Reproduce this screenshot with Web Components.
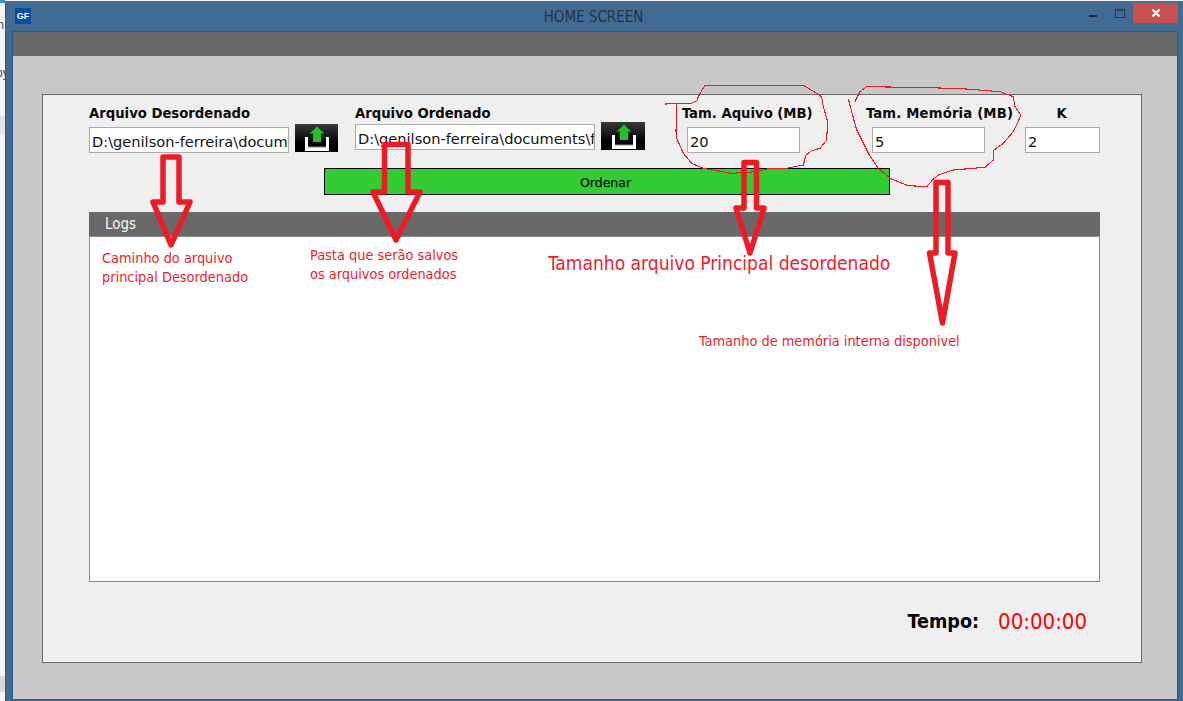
<!DOCTYPE html>
<html lang="pt">
<head>
<meta charset="utf-8">
<title>HOME SCREEN</title>
<style>
  html, body { margin: 0; height: 100%; overflow: hidden; }
  body {
    display: flex;
    background: #f5f5f5;
    font-family: "DejaVu Sans", Verdana, sans-serif;
    font-stretch: condensed;
  }
  .scrap { width: 5px; flex: none; }
</style>
</head>
<body>
<desktop-scrap class="scrap"></desktop-scrap>
<app-window heading="HOME SCREEN">
  <main-panel>
    <fields-row>
      <path-field label="Arquivo Desordenado" value="D:\genilson-ferreira\docum" width="200" style="--label-gap:4px;--btn-top:-3px;--btn-w:43px"></path-field>
      <path-field label="Arquivo Ordenado" value="D:\genilson-ferreira\documents\f" width="240" style="--label-gap:1px;--btn-top:-2px;--btn-w:44px;margin-left:17px"></path-field>
      <num-field label="Tam. Aquivo (MB)" value="20" style="width:130px;margin-left:37px;--box-w:113px;--box-left:5px"></num-field>
      <num-field label="Tam. Memória (MB)" value="5" style="width:147px;margin-left:54px;--box-w:113px;--box-left:6px;letter-spacing:.17px"></num-field>
      <num-field label="K" value="2" style="width:75px;margin-left:12px;--box-w:75px;--label-align:center;--label-right:2px"></num-field>
    </fields-row>
    <sort-button>Ordenar</sort-button>
    <logs-panel></logs-panel>
    <time-bar value="00:00:00"></time-bar>
  </main-panel>
</app-window>
<anno-layer></anno-layer>

<script>
  class DesktopScrap extends HTMLElement {
    constructor() {
      super();
      this.attachShadow({ mode: 'open' });
    }
    connectedCallback() {
      this.shadowRoot.innerHTML = `
      <style>
        :host { display: block; position: relative; overflow: hidden; height: 701px; }
        .t { position: absolute; font: 12px "Liberation Sans", sans-serif; color: #444; white-space: nowrap; }
        .top { position: absolute; left: 0; top: 0; width: 5px; height: 3px; background: #3b8fd0; }
        .band { position: absolute; left: 0; top: 116px; width: 5px; height: 18px; background: #e4e4e4; }
        .band2 { position: absolute; left: 0; top: 676px; width: 5px; height: 16px; background: #d8d8d8; }
      </style>
      <div class="top"></div>
      <span class="t" style="left:-6px;top:18px">m</span>
      <span class="t" style="left:-4px;top:66px">oy</span>
      <div class="band"></div>
      <div class="band2"></div>`;
    }
  }

  class AppWindow extends HTMLElement {
    constructor() {
      super();
      this.attachShadow({ mode: 'open' });
    }
    connectedCallback() {
      const heading = this.getAttribute('heading');
      this.shadowRoot.innerHTML = `
      <style>
        :host {
          display: flex;
          flex-direction: column;
          flex: 1;
          min-width: 0;
          height: 700px;
          margin-top: 1px;
          box-sizing: border-box;
          background: #426b94;
          border-top: 1px solid #5d6d7d;
          border-left: 1px solid #2f5a85;
          padding: 0 6px 2px 7px;
        }
        .title {
          height: 30px;
          flex: none;
          display: grid;
          grid-template-columns: 1fr auto 1fr;
          align-items: start;
          margin: 0 -6px 0 -7px;
        }
        .logo {
          margin: 6px 0 0 9px;
          width: 16px;
          height: 16px;
          background: #0b4aa0;
          color: #fff;
          font: bold 9px/16px "Liberation Sans", sans-serif;
          text-align: center;
        }
        h1 {
          margin: 5px 0 0 0;
          font-size: 15px;
          font-weight: normal;
          line-height: 20px;
          color: #26323c;
          position: relative;
          left: -1px;
        }
        .ctrls { display: flex; justify-content: flex-end; align-items: flex-start; }
        .min { width: 8px; height: 2px; background: #1c2530; margin: 13px 18px 0 0; }
        .max { width: 8px; height: 6px; border: 1px solid #26415e; border-top-width: 2px; margin: 7px 8px 0 0; }
        .close {
          width: 45px;
          height: 20px;
          margin: 1px 5px 0 0;
          background: #c75050;
          display: flex;
          align-items: center;
          justify-content: center;
        }
        .client {
          flex: 1;
          min-height: 0;
          display: flex;
          flex-direction: column;
          background: #c8c8c8;
          box-shadow: 0 0 0 1px #2f5a85;
        }
        .bar { height: 24px; flex: none; background: #696969; }
      </style>
      <div class="title">
        <div class="logo">GF</div>
        <h1>${heading}</h1>
        <div class="ctrls">
          <div class="min"></div>
          <div class="max"></div>
          <div class="close">
            <svg width="10" height="10" viewBox="0 0 10 10"><path d="M1.5 1.5l7 7M8.5 1.5l-7 7" stroke="#fff" stroke-width="2.2" fill="none"/></svg>
          </div>
        </div>
      </div>
      <div class="client">
        <div class="bar"></div>
        <slot></slot>
      </div>`;
    }
  }

  class MainPanel extends HTMLElement {
    constructor() {
      super();
      this.attachShadow({ mode: 'open' });
    }
    connectedCallback() {
      this.shadowRoot.innerHTML = `
      <style>
        :host {
          display: flex;
          flex-direction: column;
          flex: 1;
          min-height: 0;
          margin: 38px 35px 36px 29px;
          padding: 8px 41px 0 46px;
          background: #efefef;
          border: 1px solid #696969;
        }
      </style>
      <slot></slot>`;
    }
  }

  class FieldsRow extends HTMLElement {
    constructor() {
      super();
      this.attachShadow({ mode: 'open' });
    }
    connectedCallback() {
      this.shadowRoot.innerHTML = `
      <style>
        :host { display: flex; align-items: flex-start; height: 50px; flex: none; }
      </style>
      <slot></slot>`;
    }
  }

  const labelCss = `
    .label {
      display: block;
      font-size: 14.7px;
      font-weight: bold;
      line-height: 20px;
      color: #0a0a0a;
      white-space: nowrap;
    }
    .box {
      box-sizing: border-box;
      height: 26px;
      background: #fff;
      border: 1px solid #ababab;
      font-size: 14.6px;
      font-stretch: normal;
      letter-spacing: 0;
      line-height: 27px;
      padding-left: 2px;
      color: #111;
      white-space: nowrap;
      overflow: hidden;
    }`;

  class PathField extends HTMLElement {
    constructor() {
      super();
      this.attachShadow({ mode: 'open' });
    }
    connectedCallback() {
      const w = this.getAttribute('width');
      this.shadowRoot.innerHTML = `
      <style>
        :host { display: block; flex: none; }
        ${labelCss}
        .row { display: flex; align-items: flex-start; gap: 6px; margin-top: var(--label-gap, 4px); }
        .box { width: ${w}px; }
        upload-button { margin-top: var(--btn-top, 0); width: var(--btn-w, 43px); }
      </style>
      <div class="label">${this.getAttribute('label')}</div>
      <div class="row">
        <div class="box">${this.getAttribute('value')}</div>
        <upload-button></upload-button>
      </div>`;
    }
  }

  class NumField extends HTMLElement {
    constructor() {
      super();
      this.attachShadow({ mode: 'open' });
    }
    connectedCallback() {
      this.shadowRoot.innerHTML = `
      <style>
        :host { display: block; flex: none; }
        ${labelCss}
        .label { text-align: var(--label-align, left); padding-right: var(--label-right, 0); }
        .box { width: var(--box-w); margin: 4px 0 0 var(--box-left, 0); }
      </style>
      <div class="label">${this.getAttribute('label')}</div>
      <div class="box">${this.getAttribute('value')}</div>`;
    }
  }

  class UploadButton extends HTMLElement {
    constructor() {
      super();
      this.attachShadow({ mode: 'open' });
    }
    connectedCallback() {
      this.shadowRoot.innerHTML = `
      <style>
        :host {
          display: block;
          height: 28px;
          flex: none;
          background: linear-gradient(#3a3a3a, #000 70%);
        }
        svg { display: block; margin: 0 auto; }
      </style>
      <svg width="43" height="28" viewBox="0 0 43 28">
        <path d="M10 13h3v10h18V13h3v14H10z" fill="#fff"/>
        <path d="M13 22.5h18v1H13z" fill="#8a8a8a"/>
        <path d="M22 2.5l7.5 7H26V18h-8V9.5h-3.5z" fill="#22c02a"/>
      </svg>`;
    }
  }

  class SortButton extends HTMLElement {
    constructor() {
      super();
      this.attachShadow({ mode: 'open' });
    }
    connectedCallback() {
      this.shadowRoot.innerHTML = `
      <style>
        :host {
          display: block;
          flex: none;
          box-sizing: border-box;
          width: 566px;
          height: 27px;
          margin: 15px 0 0 235px;
          padding-right: 3px;
          background: #32cd32;
          border: 1px solid #000;
          text-align: center;
          font-size: 12.5px;
          font-stretch: normal;
          -webkit-text-stroke: .25px #0a0a0a;
          line-height: 27px;
          color: #0a0a0a;
        }
      </style>
      <slot></slot>`;
    }
  }

  class LogsPanel extends HTMLElement {
    constructor() {
      super();
      this.attachShadow({ mode: 'open' });
    }
    connectedCallback() {
      this.shadowRoot.innerHTML = `
      <style>
        :host {
          display: flex;
          flex-direction: column;
          flex: none;
          height: 370px;
          margin-top: 17px;
          box-sizing: border-box;
        }
        header {
          height: 25px;
          flex: none;
          box-sizing: border-box;
          background: #696969;
          border-bottom: 1px solid #8a8a94;
          color: #f5f5f5;
          font-size: 15px;
          line-height: 24px;
          padding-left: 16px;
        }
        .body {
          flex: 1;
          background: #fff;
          border: 1px solid #8a8a94;
          border-top: 0;
        }
      </style>
      <header>Logs</header>
      <div class="body"></div>`;
    }
  }

  class TimeBar extends HTMLElement {
    constructor() {
      super();
      this.attachShadow({ mode: 'open' });
    }
    connectedCallback() {
      this.shadowRoot.innerHTML = `
      <style>
        :host {
          display: flex;
          justify-content: flex-end;
          align-items: center;
          gap: 19px;
          flex: none;
          height: 26px;
          margin-top: 26px;
          padding-right: 13px;
          font-size: 19.6px;
        }
        .name { font-weight: bold; color: #050505; }
        .val { color: #fe0000; font-size: 22px; }
      </style>
      <span class="name">Tempo:</span>
      <span class="val">${this.getAttribute('value')}</span>`;
    }
  }

  class AnnoLayer extends HTMLElement {
    constructor() {
      super();
      this.attachShadow({ mode: 'open' });
    }
    connectedCallback() {
      this.shadowRoot.innerHTML = `
      <style>
        :host { position: absolute; left: 0; top: 0; width: 1183px; height: 701px; pointer-events: none; }
        svg { position: absolute; left: 0; top: 0; }
        .arrow { fill: none; stroke: #ed1c24; stroke-width: 5.5; stroke-linejoin: round; }
        .loop { fill: none; stroke: #ed1c24; stroke-width: 3.3; shape-rendering: crispEdges; }
        p { position: absolute; margin: 0; color: #ed1c2e; font-size: 14.4px; line-height: 19px; white-space: nowrap; }
      </style>
      <svg width="1183" height="701" viewBox="0 0 1183 701">
        <path class="arrow" d="M163 157H179V202H190L171 245L153 202H163Z"/>
        <path class="arrow" d="M384.5 144.5H408V192H420L396 240L373 192H384.5Z"/>
        <path class="arrow" d="M744 162.5H756.5V208H764L750 253L736 208H744Z"/>
        <path class="arrow" d="M936 182.5H948V253H955L942.5 323L929.5 253H936Z"/>
        <g transform="translate(660 80) scale(.3333)">
          <path class="loop" d="M15 72L95 70L110 62L120 40L135 17L430 16L470 40L485 50L490 80L503 125L500 180L480 205L455 212L438 225L430 255L380 265L330 265L290 275L215 280L130 265L95 250L70 220L50 175L48 155L50 72"/>
        </g>
        <g transform="translate(660 75) scale(.3333)">
          <path class="loop" d="M565 72L575 110L590 165L625 235L655 280L690 310L745 332L800 335L818 315L835 300L880 285L975 277L1000 255L1002 225L1030 205L1060 170L1075 140L1082 120L1065 95L1060 65L1020 50L920 42L810 38L620 35L600 50L585 80"/>
        </g>
      </svg>
      <p style="left:102px;top:249px">Caminho do arquivo<br>principal Desordenado</p>
      <p style="left:310px;top:246px">Pasta que serão salvos<br>os arquivos ordenados</p>
      <p style="left:548px;top:251px;font-size:19.05px;line-height:24px">Tamanho arquivo Principal desordenado</p>
      <p style="left:699px;top:332px">Tamanho de memória interna disponivel</p>`;
    }
  }

  customElements.define('desktop-scrap', DesktopScrap);
  customElements.define('upload-button', UploadButton);
  customElements.define('app-window', AppWindow);
  customElements.define('main-panel', MainPanel);
  customElements.define('fields-row', FieldsRow);
  customElements.define('path-field', PathField);
  customElements.define('num-field', NumField);
  customElements.define('sort-button', SortButton);
  customElements.define('logs-panel', LogsPanel);
  customElements.define('time-bar', TimeBar);
  customElements.define('anno-layer', AnnoLayer);
</script>
</body>
</html>
